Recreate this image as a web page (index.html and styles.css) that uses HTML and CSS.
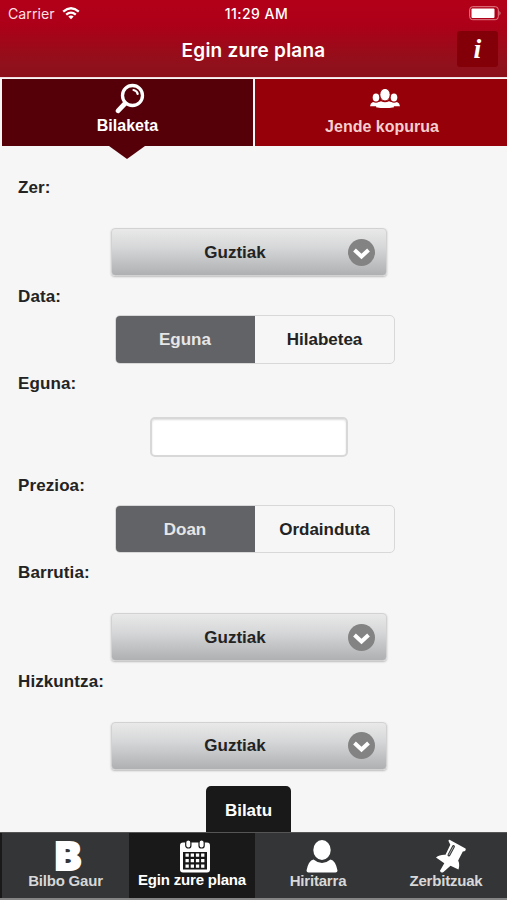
FILE: index.html
```html
<!DOCTYPE html>
<html lang="eu">
<head>
<meta charset="utf-8">
<title>Egin zure plana</title>
<link rel="stylesheet" href="styles.css">
</head>
<body>
<div class="app">
  <header class="header">
    <div class="status">
      <div class="carrier"><span>Carrier</span>
        <svg width="18" height="13" viewBox="0 0 18 13" fill="none" stroke="#fff" stroke-width="2.3"><path d="M1.2 4.6Q9-2.2 16.8 4.6M4.2 7.7Q9 3.6 13.8 7.7"/><path d="M9 12.2 6.3 9.5Q9 7.4 11.7 9.5Z" fill="#fff" stroke="none"/></svg>
      </div>
      <span class="time">11:29 AM</span>
      <svg class="battery" width="33" height="15" viewBox="0 0 33 15"><rect x=".7" y=".7" width="28.6" height="13" rx="3" fill="none" stroke="#e2808a" stroke-width="1"/><rect x="2.5" y="2.5" width="23" height="9.5" rx="1" fill="#fff"/><path d="M30.5 5q2 2.2 0 4.5z" fill="#e2a0a6"/></svg>
    </div>
    <div class="titlebar">
      <h1>Egin zure plana</h1>
      <button class="info" type="button">i</button>
    </div>
  </header>
  <nav class="tabs">
    <a class="tab active">
      <svg width="32" height="32" viewBox="0 0 32 32" fill="none" stroke="#fff" stroke-linecap="round"><circle cx="18.5" cy="12.5" r="10" stroke-width="3.3"/><path d="M11 20.5 4 27.8" stroke-width="4.8"/><path d="M19.5 7q3.6.8 4.2 4" stroke-width="2.2"/></svg>
      <span>Bilaketa</span>
    </a>
    <a class="tab people">
      <svg width="30" height="20" viewBox="0 0 30 20" fill="#fff"><ellipse cx="6" cy="8.4" rx="3.3" ry="4"/><ellipse cx="24" cy="8.4" rx="3.3" ry="4"/><path d="M0 17.3q.3-3.3 3-4.2 3 1.3 6 0l2 4.2zM30 17.3q-.3-3.3-3-4.2-3 1.3-6 0l-2 4.2z"/><path d="M6 18.2q.3-4.7 5-5.9 4 2.1 8 0 4.7 1.2 5 5.9-9 1.7-18 0z"/><ellipse cx="15" cy="5.7" rx="5.2" ry="6.3" stroke="#960008" stroke-width="1"/></svg>
      <span>Jende kopurua</span>
    </a>
  </nav>
  <main class="form">
    <div class="label">Zer:</div>
    <button class="select" type="button"><span>Guztiak</span><svg width="27" height="27" viewBox="0 0 27 27"><circle cx="13.5" cy="13.5" r="13.5" fill="#838383"/><path d="m6.5 11 7 6.5 7-6.5" fill="none" stroke="#fff" stroke-width="4"/></svg></button>
    <div class="label">Data:</div>
    <div class="segment"><span class="on">Eguna</span><span>Hilabetea</span></div>
    <div class="label">Eguna:</div>
    <input class="date" type="text" aria-label="Eguna">
    <div class="label after-input">Prezioa:</div>
    <div class="segment"><span class="on">Doan</span><span>Ordainduta</span></div>
    <div class="label">Barrutia:</div>
    <button class="select" type="button"><span>Guztiak</span><svg width="27" height="27" viewBox="0 0 27 27"><circle cx="13.5" cy="13.5" r="13.5" fill="#838383"/><path d="m6.5 11 7 6.5 7-6.5" fill="none" stroke="#fff" stroke-width="4"/></svg></button>
    <div class="label">Hizkuntza:</div>
    <button class="select" type="button"><span>Guztiak</span><svg width="27" height="27" viewBox="0 0 27 27"><circle cx="13.5" cy="13.5" r="13.5" fill="#838383"/><path d="m6.5 11 7 6.5 7-6.5" fill="none" stroke="#fff" stroke-width="4"/></svg></button>
    <button class="search" type="button">Bilatu</button>
  </main>
  <nav class="bottom">
    <a class="item home"><b class="logo">B</b><span>Bilbo Gaur</span></a>
    <a class="item current">
      <svg width="32" height="34" viewBox="0 0 32 34"><rect x="1" y="3.5" width="30" height="30" rx="3" fill="#fff"/><path d="M4 13h24v17.5H4z" fill="#191919"/><path d="M6.5 14.5h3.3v3.3H6.5zm5.2 0H15v3.3h-3.3zm5.2 0h3.3v3.3h-3.3zm5.2 0h3.3v3.3h-3.3zM6.5 20h3.3v3.3H6.5zm5.2 0H15v3.3h-3.3zm5.2 0h3.3v3.3h-3.3zm5.2 0h3.3v3.3h-3.3zM6.5 25.5h3.3v3.3H6.5zm5.2 0H15v3.3h-3.3zm5.2 0h3.3v3.3h-3.3zm5.2 0h3.3v3.3h-3.3z" fill="#fff"/><rect x="6.7" y="1" width="5.2" height="8" rx="2.6" fill="#fff" stroke="#191919" stroke-width="1.2"/><rect x="20" y="1" width="5.2" height="8" rx="2.6" fill="#fff" stroke="#191919" stroke-width="1.2"/></svg>
      <span>Egin zure plana</span></a>
    <a class="item citizen"><svg width="32" height="34" viewBox="0 0 32 34" fill="#fff"><ellipse cx="16" cy="11" rx="8.7" ry="10"/><path d="M.5 31.5Q2.5 21.5 7.5 20.5 16 27.5 24.5 20.5 29.5 21.5 31.5 31.5 31.5 33.5 29.5 33.5H2.5Q.5 33.5.5 31.5Z"/></svg><span>Hiritarra</span></a>
    <a class="item services"><svg width="32" height="34" viewBox="0 0 32 34"><path d="M13.5 2Q13.5 .5 15 .9L30.5 9.5Q31.3 11.5 29.5 12.2L27.8 12.4 23.2 21.5Q25 25.500 23.500 30.500L15.500 26.800 8.500 33Q5.500 34.500 5 31.800L9.300 24.200 1 18.500Q4.500 15.500 10.500 15.800L15.300 5.800Z" fill="#fff"/><path d="m18.500 7.500-4.600 8.600" stroke="#333536" stroke-width="2.800" stroke-linecap="round"/><path d="m18.500 7.500-4.600 8.600" stroke="#fff" stroke-width=".6"/></svg><span>Zerbitzuak</span></a>
  </nav>
</div>
</body>
</html>
```
FILE: styles.css
```css
* { box-sizing: border-box; }
body { margin: 0; background: #f6f6f6; font-family: "Liberation Sans", Arial, sans-serif; color: #232323; }
button { font: inherit; border: 0; padding: 0; }
.app { width: 507px; height: 900px; display: flex; flex-direction: column; overflow: hidden; }
.header { height: 78px; flex: none; color: #fff; background: linear-gradient(#b30019 0, #ad0018 32%, #92101b 80%, #8b101a); border-bottom: 1px solid #f3dcdd; }
.status { height: 28px; padding: 0 5px 2px 8px; display: grid; grid-template-columns: 1fr auto 1fr; align-items: center; font: 14.2px Inter, sans-serif; }
.carrier { display: flex; align-items: center; gap: 7px; color: #ffdfe2; }
.time { font-weight: 500; font-size: 14px; letter-spacing: .45px; margin-left: 3px; }
.battery { justify-self: end; }
.titlebar { display: grid; grid-template-columns: 1fr auto 1fr; align-items: center; padding: 3px 9px 0; }
h1 { grid-column: 2; margin: 2px 0 0; font: 600 19px Inter, sans-serif; letter-spacing: .22px; }
.info { justify-self: end; width: 41px; height: 36px; border-radius: 3px; background: #830009; color: #fff; font: italic bold 28px/34px "Liberation Serif", serif; }
.tabs { height: 69px; flex: none; display: grid; grid-template-columns: 251px 1fr; gap: 2px; padding: 1px 0 1px 2px; }
.tab { position: relative; background: #960008; color: #f3cfd0; display: flex; flex-direction: column; align-items: center; font-size: 16px; font-weight: bold; }
.tab svg { margin-top: 10px; }
.tab span { line-height: 20px; margin-top: 8px; }
.people svg { margin-left: 8px; }
.people span { margin-left: 2px; }
.tab.active { background: #550009; color: #fff; }
.tab.active svg { margin: 4px 0 0 4px; }
.tab.active span { margin-top: 1px; }
.tab.active::after { content: ""; position: absolute; top: 100%; left: 107px; border: solid transparent; border-width: 13px 18px 0; border-top-color: #550009; }
.form { flex: 1; min-height: 0; display: flex; flex-direction: column; font-weight: bold; font-size: 17px; }
.label { height: 24px; line-height: 25px; margin: 8px 0 0 18px; letter-spacing: .1px; }
.label:first-child { margin-top: 28px; }
.label.after-input { margin-top: 16px; }
.select { width: 276px; height: 48px; margin: 29px 0 0 110.5px; padding: 0 11px 0 11px; display: flex; align-items: center; justify-content: space-between; border: 1px solid #d2d2d2; border-radius: 4px; background: linear-gradient(#e9e9e9, #d6d7d8 40%, #aeb0b2); box-shadow: 0 1px 2px #bbb; color: #232323; }
.select + .label { margin-top: 7.5px; }
.select span { flex: 1; text-align: center; padding-top: 1px; }
.segment { width: 280px; height: 48.5px; margin: 7.5px 0 0 115px; display: grid; grid-template-columns: 1fr 1fr; border: 1px solid #d8d8d8; border-radius: 5px; line-height: 48px; text-align: center; overflow: hidden; }
.segment + .label { margin-top: 7px; }
.segment .on { margin: -1px 0 -1px -1px; line-height: 50px; background: #626366; color: #e6e6e6; }
.date { width: 198px; height: 40px; margin: 22.5px 0 0 149.5px; border: 2px solid #d8d8d8; border-radius: 5px; background: #fff; box-shadow: inset 0 1px 2px #ddd; }
.search { width: 85px; flex: 1; min-height: 0; margin: 16px 0 0 206px; border-radius: 5px 5px 0 0; background: #191919; color: #fff; padding-top: 5px; }
.bottom { height: 68px; flex: none; display: grid; grid-template-columns: 129px 126px 126px 126px; border-top: 1px solid #555; border-bottom: 2px solid #858585; background: #333536; }
.item { display: flex; flex-direction: column; align-items: center; padding: 6px 5px 0; color: #d8d8d8; font-weight: bold; font-size: 15px; letter-spacing: -.2px; white-space: nowrap; }
.item:first-child { border-left: 2px solid #191919; }
.item svg, .logo { height: 34px; flex: none; }
.item span { line-height: 18px; margin-top: -1px; }
.item.current { background: #191919; color: #fff; padding: 6px 0 0; }
.item.current svg { margin-left: 6px; }
.item.current span { margin-top: -2px; }
.item.citizen svg { margin-left: 7px; }
.item.services { padding-left: 9px; }
.item.services svg { margin-left: 9px; }
.logo { font: 900 39px/34px Inter, sans-serif; color: #fff; -webkit-text-stroke: 2px #fff; margin-left: 5px; height: 32px; margin-bottom: 2px; }
```
